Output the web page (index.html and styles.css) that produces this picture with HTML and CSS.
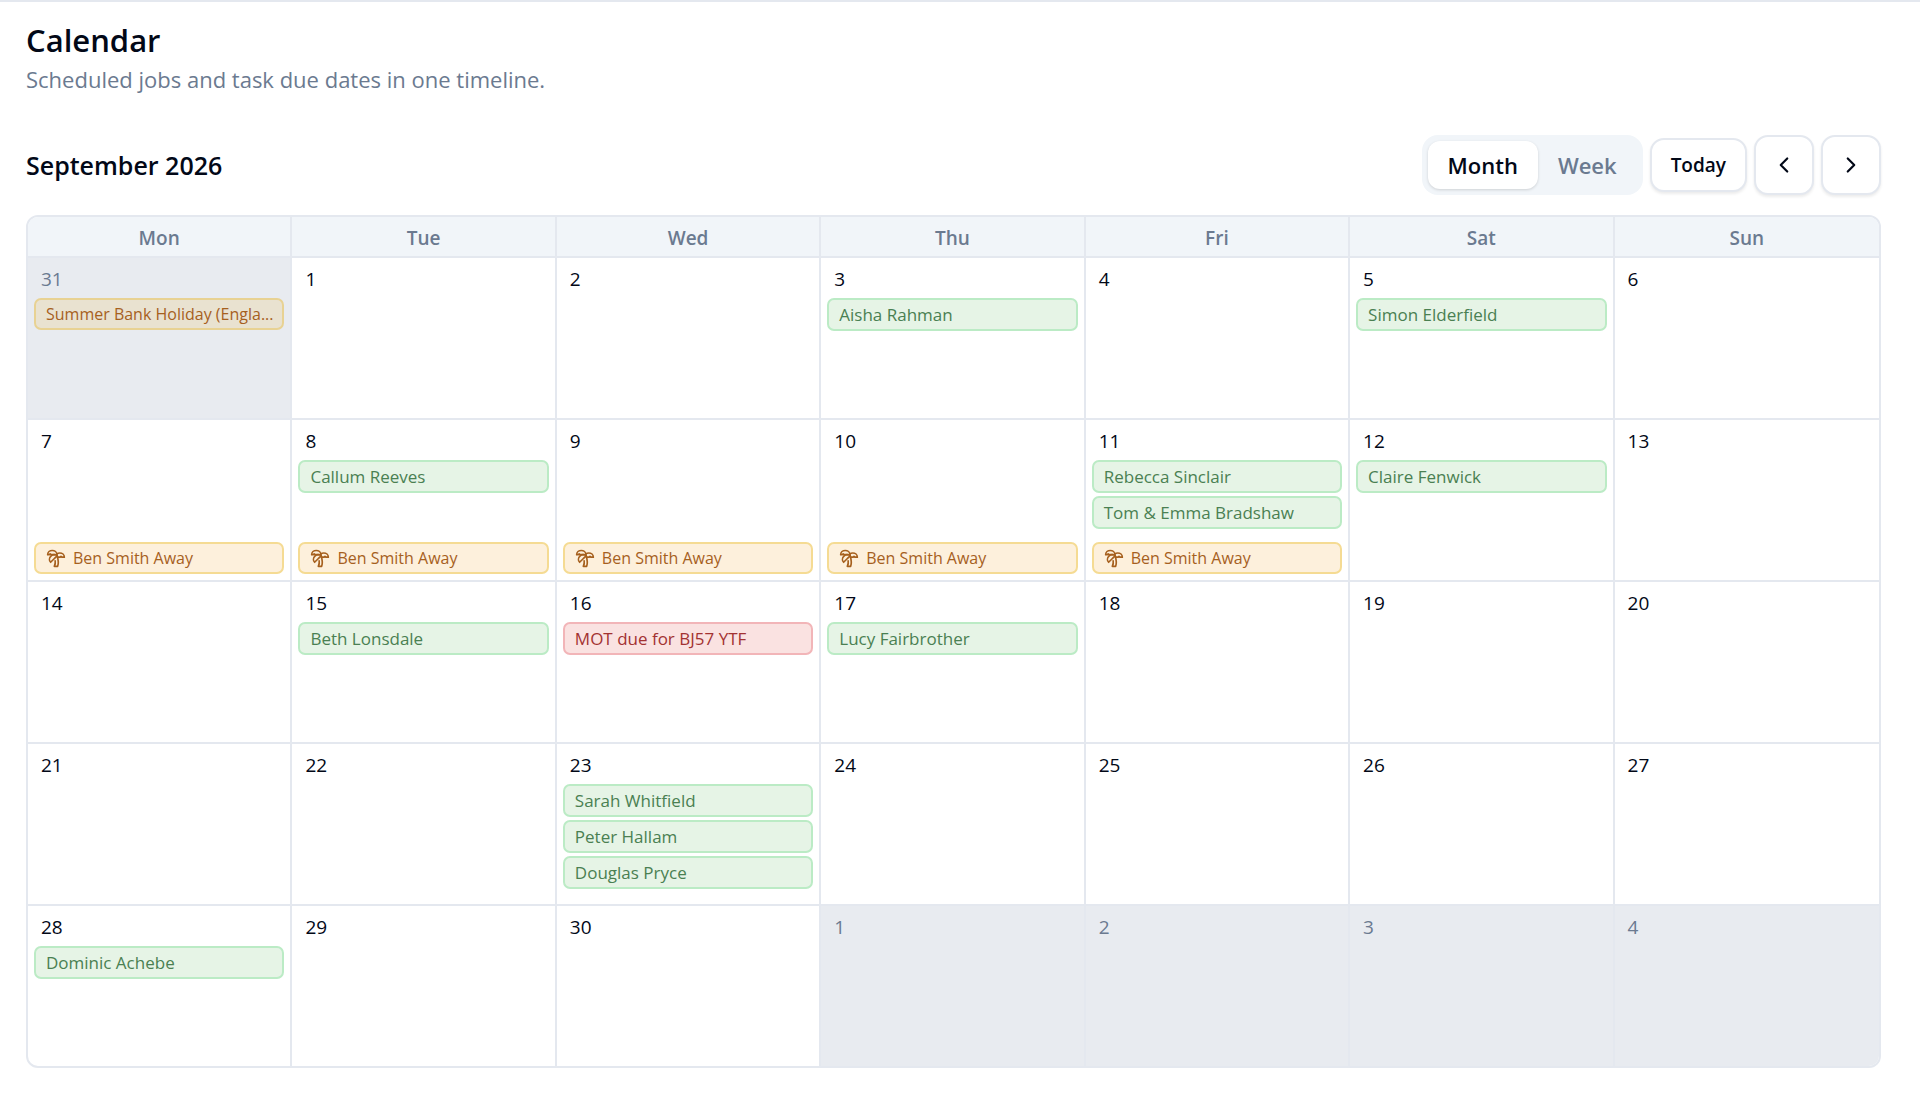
FILE: index.html
```html
<!DOCTYPE html>
<html lang="en">

<head>
    <meta charset="UTF-8">
    <meta name="viewport" content="width=device-width, initial-scale=1.0">
    <title>Calendar</title>
    <link rel="stylesheet" href="styles.css">
</head>

<body>
    <!-- Palm icon used by the away entries -->
    <svg class="sprite" aria-hidden="true">
        <symbol id="palm" viewBox="0 0 24 24">
            <path d="M13 8c0-2.76-2.46-5-5.5-5S2 5.24 2 8h2l1-1 1 1h4" />
            <path d="M13 7.14A5.82 5.82 0 0 1 16.5 6c3.04 0 5.5 2.24 5.5 5h-3l-1-1-1 1h-3" />
            <path d="M5.89 9.71c-2.15 2.15-2.3 5.47-.35 7.43l4.24-4.25.7-.7.71-.71 2.12-2.12c-1.95-1.96-5.27-1.8-7.42.35" />
            <path d="M11 15.5c.5 2.5-.17 4.5-1 6.5h4c2-5.5-.5-12-1-14" />
        </symbol>
    </svg>

    <main class="page">
        <header class="page-header">
            <h1>Calendar</h1>
            <p>Scheduled jobs and task due dates in one timeline.</p>
        </header>

        <div class="toolbar">
            <h2>September 2026</h2>
            <div class="controls">
                <div class="view-switch" role="group" aria-label="View">
                    <button type="button" class="active" aria-pressed="true">Month</button>
                    <button type="button" aria-pressed="false">Week</button>
                </div>
                <button type="button" class="today">Today</button>
                <button type="button" class="arrow" aria-label="Previous month">
                    <svg viewBox="0 0 24 24"><path d="m15 18-6-6 6-6" /></svg>
                </button>
                <button type="button" class="arrow" aria-label="Next month">
                    <svg viewBox="0 0 24 24"><path d="m9 18 6-6-6-6" /></svg>
                </button>
            </div>
        </div>

        <div class="calendar">
            <table>
                <thead>
                    <tr>
                        <th>Mon</th>
                        <th>Tue</th>
                        <th>Wed</th>
                        <th>Thu</th>
                        <th>Fri</th>
                        <th>Sat</th>
                        <th>Sun</th>
                    </tr>
                </thead>
                <tbody>
                    <tr>
                        <td class="outside">
                            <div class="day">
                                <span class="date">31</span>
                                <div class="event holiday">Summer Bank Holiday (Engla...</div>
                            </div>
                        </td>
                        <td><div class="day"><span class="date">1</span></div></td>
                        <td><div class="day"><span class="date">2</span></div></td>
                        <td>
                            <div class="day">
                                <span class="date">3</span>
                                <div class="event job">Aisha Rahman</div>
                            </div>
                        </td>
                        <td><div class="day"><span class="date">4</span></div></td>
                        <td>
                            <div class="day">
                                <span class="date">5</span>
                                <div class="event job">Simon Elderfield</div>
                            </div>
                        </td>
                        <td><div class="day"><span class="date">6</span></div></td>
                    </tr>
                    <tr>
                        <td>
                            <div class="day">
                                <span class="date">7</span>
                                <div class="event away"><svg><use href="#palm" /></svg>Ben Smith Away</div>
                            </div>
                        </td>
                        <td>
                            <div class="day">
                                <span class="date">8</span>
                                <div class="event job">Callum Reeves</div>
                                <div class="event away"><svg><use href="#palm" /></svg>Ben Smith Away</div>
                            </div>
                        </td>
                        <td>
                            <div class="day">
                                <span class="date">9</span>
                                <div class="event away"><svg><use href="#palm" /></svg>Ben Smith Away</div>
                            </div>
                        </td>
                        <td>
                            <div class="day">
                                <span class="date">10</span>
                                <div class="event away"><svg><use href="#palm" /></svg>Ben Smith Away</div>
                            </div>
                        </td>
                        <td>
                            <div class="day">
                                <span class="date">11</span>
                                <div class="event job">Rebecca Sinclair</div>
                                <div class="event job">Tom &amp; Emma Bradshaw</div>
                                <div class="event away"><svg><use href="#palm" /></svg>Ben Smith Away</div>
                            </div>
                        </td>
                        <td>
                            <div class="day">
                                <span class="date">12</span>
                                <div class="event job">Claire Fenwick</div>
                            </div>
                        </td>
                        <td><div class="day"><span class="date">13</span></div></td>
                    </tr>
                    <tr>
                        <td><div class="day"><span class="date">14</span></div></td>
                        <td>
                            <div class="day">
                                <span class="date">15</span>
                                <div class="event job">Beth Lonsdale</div>
                            </div>
                        </td>
                        <td>
                            <div class="day">
                                <span class="date">16</span>
                                <div class="event due">MOT due for BJ57 YTF</div>
                            </div>
                        </td>
                        <td>
                            <div class="day">
                                <span class="date">17</span>
                                <div class="event job">Lucy Fairbrother</div>
                            </div>
                        </td>
                        <td><div class="day"><span class="date">18</span></div></td>
                        <td><div class="day"><span class="date">19</span></div></td>
                        <td><div class="day"><span class="date">20</span></div></td>
                    </tr>
                    <tr>
                        <td><div class="day"><span class="date">21</span></div></td>
                        <td><div class="day"><span class="date">22</span></div></td>
                        <td>
                            <div class="day">
                                <span class="date">23</span>
                                <div class="event job">Sarah Whitfield</div>
                                <div class="event job">Peter Hallam</div>
                                <div class="event job">Douglas Pryce</div>
                            </div>
                        </td>
                        <td><div class="day"><span class="date">24</span></div></td>
                        <td><div class="day"><span class="date">25</span></div></td>
                        <td><div class="day"><span class="date">26</span></div></td>
                        <td><div class="day"><span class="date">27</span></div></td>
                    </tr>
                    <tr>
                        <td>
                            <div class="day">
                                <span class="date">28</span>
                                <div class="event job">Dominic Achebe</div>
                            </div>
                        </td>
                        <td><div class="day"><span class="date">29</span></div></td>
                        <td><div class="day"><span class="date">30</span></div></td>
                        <td class="outside"><div class="day"><span class="date">1</span></div></td>
                        <td class="outside"><div class="day"><span class="date">2</span></div></td>
                        <td class="outside"><div class="day"><span class="date">3</span></div></td>
                        <td class="outside"><div class="day"><span class="date">4</span></div></td>
                    </tr>
                </tbody>
            </table>
        </div>
    </main>
</body>

</html>
```

FILE: styles.css
```css
* {
    box-sizing: border-box;
}

body {
    margin: 0;
    font-family: "Segoe UI", "Open Sans", "Noto Sans", sans-serif;
    background-color: #fff;
    color: #020817;
    border-top: 2px solid #e4e8ef;
}

.sprite {
    display: none;
}

.page {
    padding: 20px 39px 26px 26px;
}

h1,
h2,
p {
    margin: 0;
}

h1 {
    font-size: 31px;
    line-height: 36px;
    font-weight: 600;
}

.page-header p {
    font-size: 22px;
    line-height: 42px;
    color: #6b7a90;
}

.toolbar {
    display: flex;
    align-items: center;
    justify-content: space-between;
    margin: 35px 0 20px;
}

h2 {
    font-size: 25px;
    line-height: 32px;
    font-weight: 600;
}

.controls {
    display: flex;
    align-items: center;
    gap: 7px;
}

button {
    font-family: inherit;
    font-weight: 600;
    color: #020817;
    background-color: #fff;
    cursor: pointer;
}

.view-switch {
    display: flex;
    padding: 6px;
    border-radius: 16px;
    background-color: #f1f5f9;
}

.view-switch button {
    height: 48px;
    padding: 0 20px;
    border: none;
    border-radius: 12px;
    font-size: 22px;
    background-color: transparent;
    color: #6b7a90;
}

.view-switch .active {
    background-color: #fff;
    color: #020817;
    box-shadow: 0 1px 3px rgba(0, 0, 0, 0.15);
}

.today,
.arrow {
    border: 2px solid #e4e8ef;
    border-radius: 14px;
    box-shadow: 0 2px 3px rgba(0, 0, 0, 0.08);
}

.today {
    height: 54px;
    padding: 0 19px;
    font-size: 19px;
}

.arrow {
    display: flex;
    align-items: center;
    justify-content: center;
    width: 60px;
    height: 60px;
    padding: 0;
}

.arrow svg {
    width: 26px;
    height: 26px;
    fill: none;
    stroke: currentColor;
    stroke-width: 2;
    stroke-linecap: round;
    stroke-linejoin: round;
}

.calendar {
    border: 2px solid #e4e8ef;
    border-radius: 12px;
    overflow: hidden;
}

table {
    width: 100%;
    table-layout: fixed;
    border-collapse: separate;
    border-spacing: 0;
}

th {
    height: 39px;
    padding: 2px 0 0;
    font-size: 19px;
    line-height: 24px;
    font-weight: 600;
    color: #6b7a90;
    background-color: #f1f5f9;
}

td {
    height: 162px;
    padding: 0;
    border-top: 2px solid #e4e8ef;
    vertical-align: top;
}

th:not(:last-child),
td:not(:last-child) {
    border-right: 2px solid #e4e8ef;
}

.outside {
    background-color: #e8ebf0;
}

.day {
    display: flex;
    flex-direction: column;
    gap: 3px;
    height: 160px;
    padding: 6px;
}

.date {
    padding: 2px 7px;
    font-size: 19px;
    line-height: 27px;
}

.outside .date {
    color: #6b7a90;
}

.event {
    display: flex;
    align-items: center;
    flex-shrink: 0;
    height: 33px;
    padding: 0 10px;
    border: 2px solid;
    border-radius: 7px;
    font-size: 17px;
    white-space: nowrap;
}

.job {
    color: #4a8052;
    background-color: #e6f4e6;
    border-color: #bbebc5;
}

.due {
    color: #a33232;
    background-color: #fae2e1;
    border-color: #f2b5b8;
}

.away,
.holiday {
    height: 32px;
    font-size: 16px;
    color: #a6601e;
    background-color: #fdf0dc;
    border-color: #f5db93;
}

.away {
    gap: 7px;
    margin-top: auto;
}

.away svg {
    width: 20px;
    height: 20px;
    fill: none;
    stroke: currentColor;
    stroke-width: 2;
    stroke-linecap: round;
    stroke-linejoin: round;
}

.holiday {
    background-color: #e9e2d0;
    border-color: #e8d293;
}
```
